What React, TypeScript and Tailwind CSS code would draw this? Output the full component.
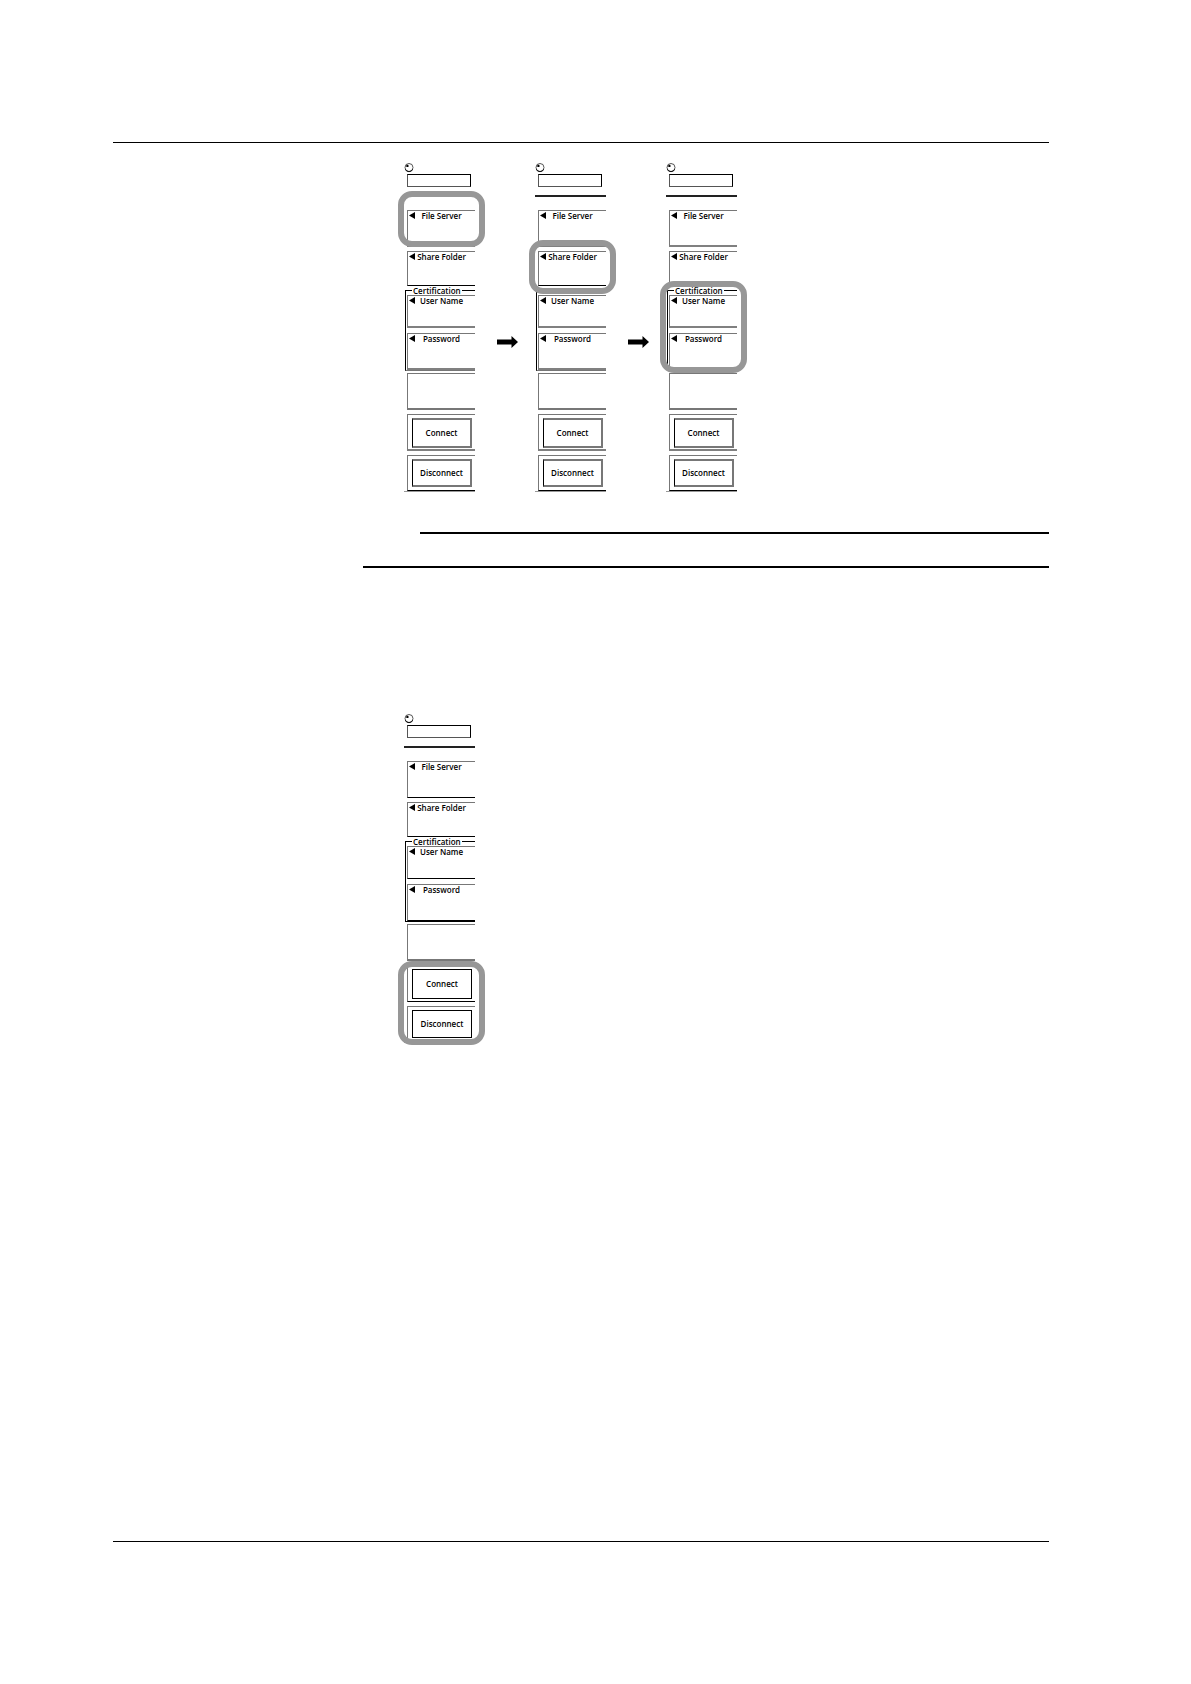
import type { ReactNode } from 'react';
import clsx from 'clsx';

type Step = 'server' | 'folder' | 'certification' | 'connection';

function Highlight({ className }: { className: string }) {
  return (
    <div
      className={clsx(
        'pointer-events-none absolute -left-[6px] -right-[10px] z-10 rounded-[14px] border-[6px] border-[#979797]',
        className
      )}
    />
  );
}

function Knob() {
  return (
    <svg className="block h-[11px] w-[10px]" viewBox="0 0 10 11" fill="none">
      <circle cx="5" cy="4.500" r="4" stroke="#555" strokeWidth="1" />
      <path d="M1.300 6.200A4 4 0 0 0 8.700 6.200" stroke="#111" strokeWidth="1" />
      <circle cx="3.400" cy="2.900" r="1.200" fill="#000" />
    </svg>
  );
}

function Arrow() {
  return (
    <svg className="ml-[22px] mr-[17px] mt-[173px] block h-[12px] w-[21px] shrink-0" viewBox="0 0 21 12">
      <path d="M0 3.500H14.500V0L21 6L14.500 12V8.500H0Z" fill="#000" />
    </svg>
  );
}

function SoftKey({ label, className }: { label: string; className: string }) {
  return (
    <button
      type="button"
      className={clsx('flex w-full items-start border-l border-t border-[#777] text-[8px] leading-[10px]', className)}
    >
      <svg className="ml-px mt-px block h-[7px] w-[6px] shrink-0" viewBox="0 0 6 7">
        <path d="M0 3.500L6 0V7Z" fill="#000" />
      </svg>
      <span className="flex-1 whitespace-nowrap pr-[7px] text-center">{label}</span>
    </button>
  );
}

function ActionKey({ label, className, buttonClassName }: { label: string; className: string; buttonClassName: string }) {
  return (
    <div className={clsx('border-l border-t border-[#777] pl-1 pr-[3px] pt-[3px]', className)}>
      <button type="button" className={clsx('block w-full whitespace-nowrap text-[8px] leading-[10px]', buttonClassName)}>
        {label}
      </button>
    </div>
  );
}

function Row({ children, className }: { children: ReactNode; className?: string }) {
  return <div className={clsx('relative pl-[3px]', className)}>{children}</div>;
}

function Menu({ step }: { step: Step }) {
  const sharp = step === 'connection';
  const heavy = sharp ? 'border-b border-b-black' : 'border-b-2 border-b-[#808080]';
  const box = sharp
    ? 'border border-black'
    : 'border-2 border-l border-[#777] border-l-black';

  return (
    <section className="w-[71px] shrink-0">
      <Knob />
      <div className="ml-[3px] mr-[4px] h-[13px] border border-black border-l-[#555] border-b-[#555]" />
      <div className="mt-2 h-[2px] bg-[#222]" />

      <Row className="mt-[13px]">
        <SoftKey label="File Server" className={clsx('h-[37px]', heavy)} />
        {step === 'server' && <Highlight className="-top-[19px] bottom-0" />}
      </Row>
      <Row className="mt-1">
        <SoftKey label="Share Folder" className="h-[35px] border-b border-b-black" />
        {step === 'folder' && <Highlight className="-bottom-[8px] -top-[11px]" />}
      </Row>

      <div className="relative pl-px">
        <fieldset
          aria-label="Certification"
          className={clsx('min-w-0 border-b border-l border-t border-black pl-px', !sharp && 'border-b-[#777]')}
        >
          {/* the folder highlight runs over the group title, so it is left blank there */}
          <legend className="ml-[5px] h-[9px] whitespace-nowrap px-px text-[8px] leading-[9px]">
            {step !== 'folder' && 'Certification'}
          </legend>
          <SoftKey label="User Name" className={clsx('h-[33px]', heavy)} />
          <SoftKey label="Password" className={clsx('mt-[5px] h-[37px]', heavy)} />
        </fieldset>
        {step === 'certification' && <Highlight className="-bottom-[2px] -top-[5px]" />}
      </div>

      <Row className="mt-[2px]">
        <div className="h-[37px] border-b-2 border-l border-t border-[#777]" />
      </Row>
      <Row className="mt-1">
        <ActionKey label="Connect" className={clsx('h-[37px]', heavy)} buttonClassName={clsx('h-[30px]', box)} />
        <ActionKey
          label="Disconnect"
          className="mt-1 h-[36px] border-b border-b-black"
          buttonClassName={clsx('h-[28px]', box)}
        />
        {step === 'connection' && <Highlight className="-bottom-[3px] -top-[4px]" />}
      </Row>
      <div className="h-px bg-[#999]" />
    </section>
  );
}

export default function App() {
  return (
    <main
      className="flex min-h-screen flex-col bg-white pb-[142px] pl-[113px] pr-[142px] pt-[142px] font-semibold text-black"
      style={{ fontFamily: '"Open Sans", "Noto Sans", sans-serif' }}
    >
      <hr className="border-t border-black" />

      <div className="flex items-start pl-[291px] pt-[20px]">
        <Menu step="server" />
        <Arrow />
        <Menu step="folder" />
        <Arrow />
        <Menu step="certification" />
      </div>

      <div className="mt-[40px]">
        <hr className="ml-[307px] border-t-2 border-black" />
        <hr className="ml-[250px] mt-8 border-t-2 border-black" />
      </div>

      <div className="pl-[291px] pt-[146px]">
        <Menu step="connection" />
      </div>

      <hr className="mt-auto border-t border-black" />
    </main>
  );
}
